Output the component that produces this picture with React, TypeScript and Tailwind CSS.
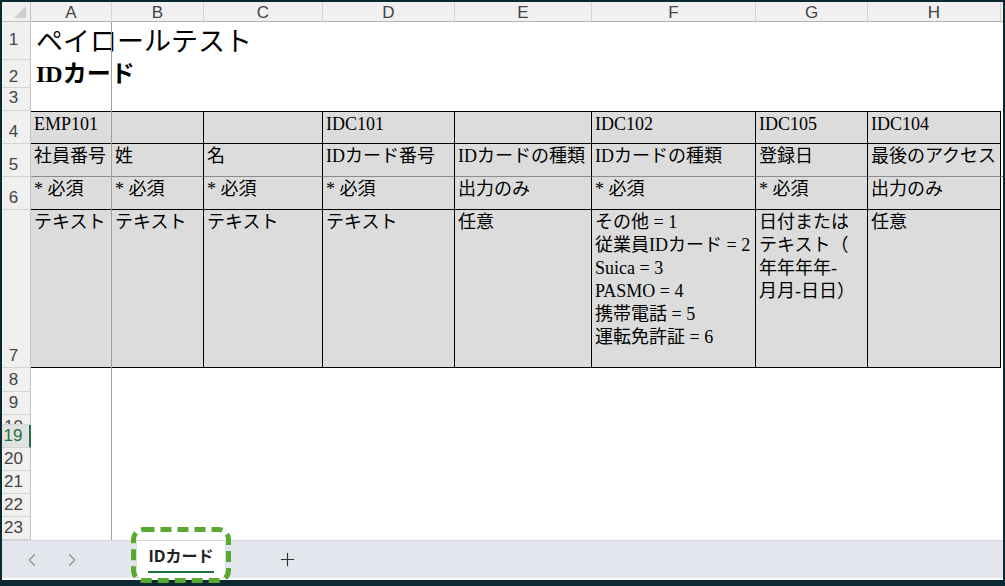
import React from 'react';
import { ChevronLeft, ChevronRight, Plus } from 'lucide-react';

// column widths A..H, written out so tailwind picks them up
const colW = ['w-[81px]', 'w-[92px]', 'w-[119px]', 'w-[132px]', 'w-[137px]', 'w-[164px]', 'w-[112px]', 'w-[133px]'];
const letters = ['A', 'B', 'C', 'D', 'E', 'F', 'G', 'H'];

type Cell = string | string[];

type Row = {
  n: string;
  h: string;
  label: string;
  cells?: Cell[];
  first?: boolean;
  grayBottom?: boolean;
  active?: boolean;
  title?: React.ReactNode;
};

const rows: Row[] = [
  {
    n: '1',
    h: 'h-[38px]',
    label: 'items-end pb-[10px]',
    title: (
      <div className="pl-[5px] h-full flex items-center pt-[2px] text-[27px] leading-none whitespace-nowrap">ペイロールテスト</div>
    ),
  },
  {
    n: '2',
    h: 'h-[28px]',
    label: 'items-end pb-[1px]',
    title: (
      <div className="pl-[5px] h-full flex items-end pb-[2px] text-[24px] font-bold leading-none whitespace-nowrap">IDカード</div>
    ),
  },
  { n: '3', h: 'h-[23px]', label: 'items-end pb-[3px]' },
  {
    n: '4',
    h: 'h-[33px]',
    label: 'items-end pb-[2px]',
    first: true,
    cells: ['EMP101', '', '', 'IDC101', '', 'IDC102', 'IDC105', 'IDC104'],
  },
  {
    n: '5',
    h: 'h-[33px]',
    label: 'items-end pb-[2px]',
    grayBottom: true,
    cells: ['社員番号', '姓', '名', 'IDカード番号', 'IDカードの種類', 'IDカードの種類', '登録日', '最後のアクセス'],
  },
  {
    n: '6',
    h: 'h-[33px]',
    label: 'items-end pb-[2px]',
    cells: ['* 必須', '* 必須', '* 必須', '* 必須', '出力のみ', '* 必須', '* 必須', '出力のみ'],
  },
  {
    n: '7',
    h: 'h-[158px]',
    label: 'items-end pb-[2px]',
    cells: [
      'テキスト',
      'テキスト',
      'テキスト',
      'テキスト',
      '任意',
      ['その他 = 1', '従業員IDカード = 2', 'Suica = 3', 'PASMO = 4', '携帯電話 = 5', '運転免許証 = 6'],
      ['日付または', 'テキスト（', '年年年年-', '月月-日日）'],
      '任意',
    ],
  },
  { n: '8', h: 'h-[24px]', label: 'items-end pb-[2px]' },
  { n: '9', h: 'h-[23px]', label: 'items-end pb-[2px]' },
  { n: '10', h: 'h-[10px]', label: 'items-start pt-[2px]' },
  { n: '19', h: 'h-[23px]', label: 'items-end pb-[2px]', active: true },
  { n: '20', h: 'h-[23px]', label: 'items-end pb-[2px]' },
  { n: '21', h: 'h-[23px]', label: 'items-end pb-[2px]' },
  { n: '22', h: 'h-[23px]', label: 'items-end pb-[2px]' },
  { n: '23', h: 'h-[23px]', label: 'items-end pb-[2px]' },
];

function RowHead({ row }: { row: Row }) {
  return (
    <div
      className={`w-[29px] shrink-0 flex justify-center pr-[5px] overflow-hidden border-b border-[#d4d4d4] text-[17px] leading-[19px] font-['Liberation_Sans',Arial,sans-serif] ${row.label} ${
        row.active
          ? 'bg-[#e1e1e1] text-[#1e7145] border-r-2 border-r-[#1e7145]'
          : 'bg-[#f0f0f0] text-[#444] border-r border-r-[#c4c4c4]'
      }`}
    >
      {row.n}
    </div>
  );
}

function TableCell({ value, i, row }: { value: Cell; i: number; row: Row }) {
  const right = i === 0 ? 'border-r-[#a0a0a0]' : 'border-r-black';
  const bottom = row.grayBottom ? 'border-b-[#8c8c8c]' : 'border-b-black';
  return (
    <div
      className={`${colW[i]} shrink-0 bg-[#dcdcdc] border-r border-b ${right} ${bottom} ${
        row.first ? 'border-t border-t-black' : ''
      } pl-[3px] pt-[1px] text-[18px] leading-[23px] whitespace-nowrap overflow-hidden text-black`}
    >
      {Array.isArray(value) ? value.map((line) => <div key={line}>{line}</div>) : value}
    </div>
  );
}

function SheetRow({ row }: { row: Row }) {
  return (
    <div className={`flex ${row.h}`}>
      <RowHead row={row} />
      {row.cells ? (
        <>
          {row.cells.map((c, i) => (
            <TableCell key={i} value={c} i={i} row={row} />
          ))}
          <div className={`flex-1 bg-white ${row.grayBottom ? 'border-b border-[#8c8c8c]' : ''}`} />
        </>
      ) : (
        <>
          <div className="w-[81px] shrink-0">{row.title}</div>
          <div className="flex-1" />
        </>
      )}
    </div>
  );
}

export default function App() {
  return (
    <div className="relative w-[1005px] h-[586px] bg-[#0c2833] pt-[2px] pl-[2px] pr-[2px] pb-[6px] overflow-hidden">
      <div className="w-[1001px] h-[578px] bg-white flex flex-col font-['Liberation_Serif','Noto_Sans_CJK_JP',serif] text-black">
        {/* column headers */}
        <div className="flex h-[20px] shrink-0">
          <div className="w-[29px] shrink-0 bg-[#f0f0f0] border-r border-b border-[#c4c4c4]">
            <svg width="28" height="19" viewBox="0 0 28 19">
              <polygon points="24,4 24,16 12,16" fill="#cfcfcf" />
            </svg>
          </div>
          {letters.map((l, i) => (
            <div
              key={l}
              className={`${colW[i]} shrink-0 bg-[#f0f0f0] border-r border-r-[#d4d4d4] border-b border-b-[#b4b4b4] flex items-center justify-center pt-[1px] text-[17px] leading-none text-[#444] font-['Liberation_Sans',Arial,sans-serif]`}
            >
              {l}
            </div>
          ))}
          <div className="flex-1 bg-[#f0f0f0] border-b border-b-[#b4b4b4]" />
        </div>

        {/* cells */}
        <div className="relative h-[518px] shrink-0">
          {rows.map((r) => (
            <SheetRow key={r.n} row={r} />
          ))}
          {/* freeze pane line */}
          <div className="absolute left-[109px] top-0 bottom-0 w-px bg-[#a0a0a0]" />
        </div>

        {/* sheet tabs */}
        <div className="h-[38px] shrink-0 bg-[#e3e6ec] border-t border-[#d6d6d6] flex items-center">
          <ChevronLeft className="ml-[19px]" size={22} strokeWidth={1.2} color="#8f8f8f" />
          <ChevronRight className="ml-[18px]" size={22} strokeWidth={1.2} color="#8f8f8f" />
          <div className="ml-[54px] w-[88px] h-[37px] bg-white rounded-b-[4px] shadow-[0_1px_2px_rgba(0,0,0,0.15)] flex flex-col items-center justify-center">
            <span className="text-[16px] leading-[20px] font-bold text-[#222] font-['Open_Sans','Noto_Sans_CJK_JP',sans-serif]">
              IDカード
            </span>
            <span className="mt-[5px] w-[66px] h-[2px] bg-[#1e7145]" />
          </div>
          <Plus className="ml-[52px]" size={21} strokeWidth={1.3} color="#333" />
        </div>
        <div className="h-[2px] bg-white" />
      </div>

      {/* green dashed highlight around the tab */}
      <svg className="absolute left-[131px] top-[527px]" width="100" height="56" viewBox="0 0 100 56">
        <rect x="2.5" y="2.5" width="95" height="51" rx="10" fill="none" stroke="#58a831" strokeWidth="5" strokeDasharray="11 6" />
      </svg>
    </div>
  );
}
